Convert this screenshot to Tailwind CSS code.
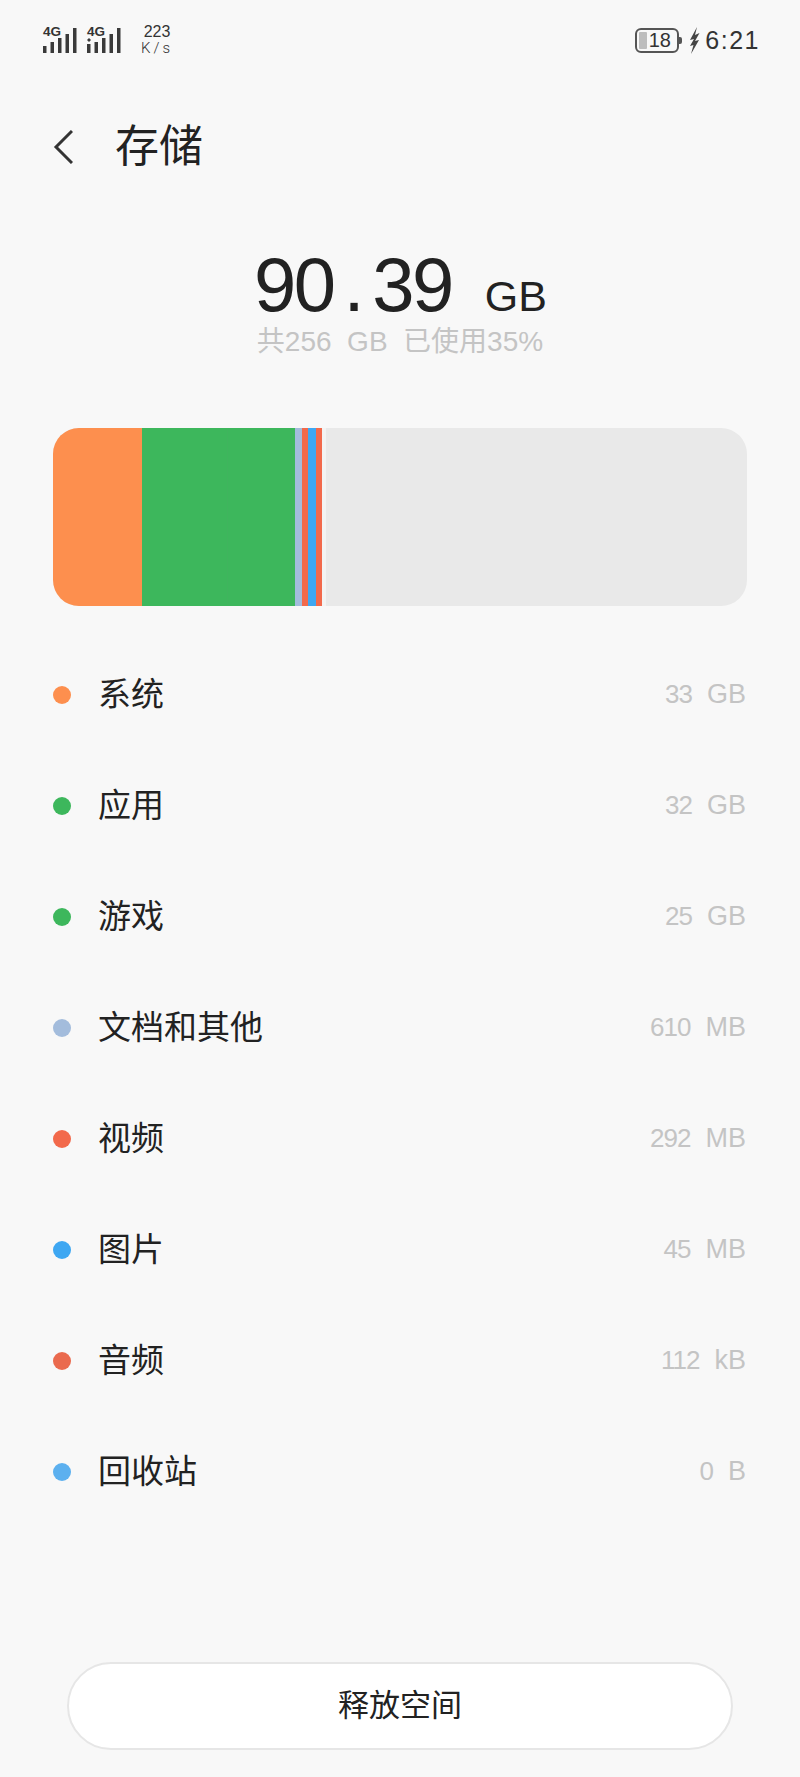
<!DOCTYPE html>
<html lang="zh-CN">
<head>
    <meta charset="UTF-8">
    <meta name="viewport" content="width=device-width, initial-scale=1.0">
    <title>存储</title>
    <script src="https://cdn.jsdelivr.net/npm/@tailwindcss/browser@4"></script>
</head>
<body class="w-[800px] h-[1777px] overflow-hidden bg-[#f8f8f8] font-['Liberation_Sans','Noto_Sans_CJK_SC',sans-serif]">
    <div class="flex flex-col h-full">
        <!-- Status bar -->
        <div class="h-[80px] shrink-0 flex items-center justify-between pl-[43px] pr-[40px] text-[#333]">
            <div class="flex items-center">
                <div class="relative w-[34px] h-[28px] top-[2px]">
                    <span class="absolute left-0 top-[-3px] text-[13.500px] leading-[14px] font-bold">4G</span>
                    <svg class="absolute left-0 top-0" width="34" height="28" viewBox="0 0 34 28" fill="#3a3a3a"><rect x="0" y="18" width="3.500" height="7"/><rect x="7.500" y="14" width="3.500" height="11"/><rect x="15" y="10" width="3.500" height="15"/><rect x="22.500" y="6" width="3.500" height="19"/><rect x="30" y="0" width="3.500" height="25"/></svg>
                </div>
                <div class="relative w-[34px] h-[28px] top-[2px] ml-[10px]">
                    <span class="absolute left-0 top-[-3px] text-[13.500px] leading-[14px] font-bold">4G</span>
                    <svg class="absolute left-0 top-0" width="34" height="28" viewBox="0 0 34 28" fill="#3a3a3a"><path d="M2 10 L4 12 L2 14 L0 12 Z"/><rect x="0" y="16" width="3.500" height="9"/><rect x="7.500" y="14" width="3.500" height="11"/><rect x="15" y="10" width="3.500" height="15"/><rect x="22.500" y="6" width="3.500" height="19"/><rect x="30" y="0" width="3.500" height="25"/></svg>
                </div>
                <div class="ml-[19px] w-[34px] flex flex-col items-center">
                    <span class="text-[16px] leading-[16px]">223</span>
                    <span class="text-[15px] leading-[16px] tracking-[3px] font-['Roboto'] font-light">K/s</span>
                </div>
            </div>
            <div class="flex items-center">
                <div class="relative w-[44px] h-[25px] rounded-[6px] border-2 border-[#555] flex items-center justify-center text-[20px] leading-none">
                    <div class="absolute left-[2px] top-[2px] bottom-[2px] w-[8px] bg-[#bdbdbd] rounded-[1px]"></div>
                    <span class="relative pl-[5px]">18</span>
                    <div class="absolute right-[-5px] top-[7px] w-[3px] h-[7px] bg-[#555] rounded-r-[2px]"></div>
                </div>
                <svg class="ml-[10px]" width="11" height="27" viewBox="0 0 11 27" fill="#444"><path d="M8 0 L1 13 L5 12 L1 19 L4.500 18 L2 27 L10 13 L6 14 L10.500 6 L6 8 Z"/></svg>
                <span class="ml-[5px] text-[25px] leading-none tracking-[1.500px] text-[#333]">6:21</span>
            </div>
        </div>

        <!-- Header -->
        <div class="h-[68px] mt-[33px] shrink-0 flex items-center pl-[53px]">
            <svg width="20" height="34" viewBox="0 0 20 34" fill="none" stroke="#333" stroke-width="3"><path d="M19 1 L3 17 L19 33"/></svg>
            <h1 class="ml-[42px] text-[44px] leading-none font-normal text-[#222]">存储</h1>
        </div>

        <!-- Used total -->
        <div class="mt-[72px] shrink-0 flex flex-col items-center">
            <div class="h-[64px] flex items-baseline text-[#222] pl-[1px]">
                <span class="text-[76px] leading-[64px] tracking-[-2.500px]">90<span class="mx-[10px]">.</span>39</span>
                <span class="ml-[33px] text-[43px] leading-none">GB</span>
            </div>
            <div class="mt-[9px] text-[28px] leading-[32px] text-[#c4c4c4]">共256&nbsp; GB&nbsp; 已使用35%</div>
        </div>

        <!-- Usage bar -->
        <div class="mt-[70px] mx-[53px] h-[178px] shrink-0 rounded-[26px] overflow-hidden flex bg-[#e9e9e9]">
            <div class="w-[89px] bg-[#fd8f4e]"></div>
            <div class="w-[85px] bg-[#3db75c]"></div>
            <div class="w-[68px] bg-[#3db75c] border-l border-[#40b45e]"></div>
            <div class="w-[7px] bg-[#a3bcdc]"></div>
            <div class="w-[6px] bg-[#f2694b]"></div>
            <div class="w-[8px] bg-[#3ea7f2]"></div>
            <div class="w-[6px] bg-[#f2694b]"></div>
            <div class="w-[4px] bg-[#f3f3f3]"></div>
        </div>

        <!-- Category list -->
        <ul class="mt-[33px] ml-[53px] mr-[54px] shrink-0">
            <li class="h-[111px] flex items-center"><span class="w-[18px] h-[18px] rounded-full bg-[#fd8f4e]"></span><span class="ml-[27px] text-[33px] text-[#222]">系统</span><span class="ml-auto text-[27px] text-[#c4c4c4]"><span class="text-[26px] tracking-[-1px]">33</span>&nbsp; GB</span></li>
            <li class="h-[111px] flex items-center"><span class="w-[18px] h-[18px] rounded-full bg-[#3db75c]"></span><span class="ml-[27px] text-[33px] text-[#222]">应用</span><span class="ml-auto text-[27px] text-[#c4c4c4]"><span class="text-[26px] tracking-[-1px]">32</span>&nbsp; GB</span></li>
            <li class="h-[111px] flex items-center"><span class="w-[18px] h-[18px] rounded-full bg-[#3db75c]"></span><span class="ml-[27px] text-[33px] text-[#222]">游戏</span><span class="ml-auto text-[27px] text-[#c4c4c4]"><span class="text-[26px] tracking-[-1px]">25</span>&nbsp; GB</span></li>
            <li class="h-[111px] flex items-center"><span class="w-[18px] h-[18px] rounded-full bg-[#a3bcdc]"></span><span class="ml-[27px] text-[33px] text-[#222]">文档和其他</span><span class="ml-auto text-[27px] text-[#c4c4c4]"><span class="text-[26px] tracking-[-1px]">610</span>&nbsp; MB</span></li>
            <li class="h-[111px] flex items-center"><span class="w-[18px] h-[18px] rounded-full bg-[#f2694b]"></span><span class="ml-[27px] text-[33px] text-[#222]">视频</span><span class="ml-auto text-[27px] text-[#c4c4c4]"><span class="text-[26px] tracking-[-1px]">292</span>&nbsp; MB</span></li>
            <li class="h-[111px] flex items-center"><span class="w-[18px] h-[18px] rounded-full bg-[#3ea7f2]"></span><span class="ml-[27px] text-[33px] text-[#222]">图片</span><span class="ml-auto text-[27px] text-[#c4c4c4]"><span class="text-[26px] tracking-[-1px]">45</span>&nbsp; MB</span></li>
            <li class="h-[111px] flex items-center"><span class="w-[18px] h-[18px] rounded-full bg-[#ea6a4e]"></span><span class="ml-[27px] text-[33px] text-[#222]">音频</span><span class="ml-auto text-[27px] text-[#c4c4c4]"><span class="text-[26px] tracking-[-1px]">112</span>&nbsp; kB</span></li>
            <li class="h-[111px] flex items-center"><span class="w-[18px] h-[18px] rounded-full bg-[#5cb0ef]"></span><span class="ml-[27px] text-[33px] text-[#222]">回收站</span><span class="ml-auto text-[27px] text-[#c4c4c4]"><span class="text-[26px] tracking-[-1px]">0</span>&nbsp; B</span></li>
        </ul>

        <!-- Action -->
        <button class="mt-auto mb-[27px] mx-[67px] h-[88px] shrink-0 rounded-full bg-white border-2 border-[#e6e6e6] text-[31px] text-[#222]">释放空间</button>
    </div>
</body>
</html>
